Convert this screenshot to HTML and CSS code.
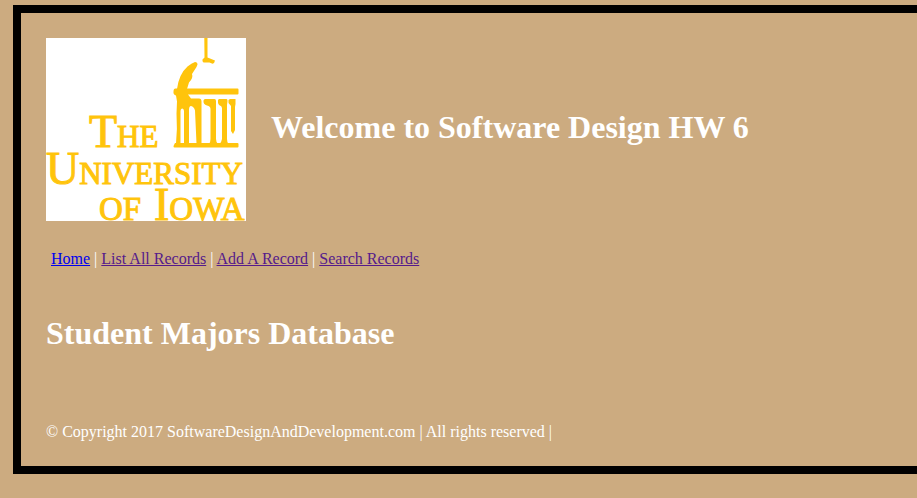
FILE: index.html
```html
<!DOCTYPE html>
<html lang="en">
<head>
<meta charset="utf-8">
<title>Student Majors Database</title>
<link rel="stylesheet" href="styles.css">
</head>
<body>
<div class="frame">
  <header class="header">
    <svg class="logo" viewBox="0 0 200 183" role="img" aria-label="The University of Iowa">
      <rect width="200" height="183" fill="#fff"/>
      <g class="dome">
        <!-- spire and left side of the dome -->
        <path d="M158.300 0h3.200v19.500l7.500 3q-.5 3-2.500 3.300l-3-1.300h-6q-1.500-1-1-3l2-2z"/>
        <path d="M149 24q2.500 0 2.500 2.500l-1 2.500-4.500 7q1.500 4-3 8.500l-2 6.500h-10q2-15 10.500-22.500 4-3.500 7.500-4.500z"/>
        <!-- cornice -->
        <path d="M129 50.500h62.500q1 0 1 1v4q0 1-1 1H142l3 4h8q2.500 0 2.500 3v42h-5l-1.500-33q-1-4-4-4.500-2 0-2 4v34h-5V73q0-2-1.500-2.500-2 0-2 3v32h-4.500q1.500-15 .5-30l.5-12-1-6q-3-1-2.500-4 0-3 2-3z"/>
        <!-- columns -->
        <path d="M159 61h9.500q1.500 0 1.500 2v38q0 3 2 5h-9q1.500-2 1.500-5V71q0-3-3.500-3.500-4-1-3.500-5 .5-1.500 1.500-1.500z"/>
        <path d="M173 61h7.500q1 0 1 2l-.5 4v34q0 3 1.500 5h-9q2-2 2.500-5V70q0-2-3-3-1.500-2-1-5z"/>
        <path d="M184 61h5.500v5l-.5 3v23l-2 4-2-3V68l-2.500-3v-3z"/>
        <!-- steps -->
        <path d="M129 105h62.500q1 0 1 1v2.500q0 1-1 1h-63q-1 0-1-1t1.500-3.500z"/>
      </g>
      <g class="wordmark">
        <text x="43" y="109"><tspan class="initial">T</tspan>HE</text>
        <text x="0" y="146"><tspan class="initial">U</tspan>NIVERSITY</text>
        <text class="last" x="53" y="182">OF</text>
        <text class="last" x="108" y="182"><tspan class="initial">I</tspan>OWA</text>
      </g>
    </svg>
    <h1>Welcome to Software Design HW 6</h1>
  </header>
  <nav class="nav">
    <a class="current" href="#home">Home</a> |
    <a href="#list">List All Records</a> |
    <a href="#add">Add A Record</a> |
    <a href="#search">Search Records</a>
  </nav>
  <main>
    <h1>Student Majors Database</h1>
  </main>
  <footer>© Copyright 2017 SoftwareDesignAndDevelopment.com | All rights reserved |</footer>
</div>
</body>
</html>
```
FILE: styles.css
```css
body {
  margin: 0;
  padding: 5px 0 24px 13px;
  background: #ccab80;
  color: #fff;
  font: 16px/18px "Liberation Serif", "Times New Roman", serif;
}

.frame {
  border: 8px solid #000;
  border-right: 0;
  padding: 25px;
}

.header {
  display: flex;
  align-items: center;
  gap: 25px;
}

.header h1 {
  padding-bottom: 5px;
}

.logo {
  flex: none;
  width: 200px;
  height: 183px;
}

.dome {
  fill: #ffc40c;
}

.wordmark {
  fill: #ffc40c;
  stroke: #ffc40c;
  stroke-width: 1px;
  font-size: 31px;
}

.last {
  font-size: 33px;
}

.initial {
  font-size: 46px;
}

h1 {
  margin: 0;
  font-size: 32px;
  line-height: 38px;
}

.nav {
  padding: 29px 5px 0;
}

.nav a {
  color: #551a8b;
}

.nav a.current {
  color: #00e;
}

main {
  padding: 46px 0 71px;
}
```
